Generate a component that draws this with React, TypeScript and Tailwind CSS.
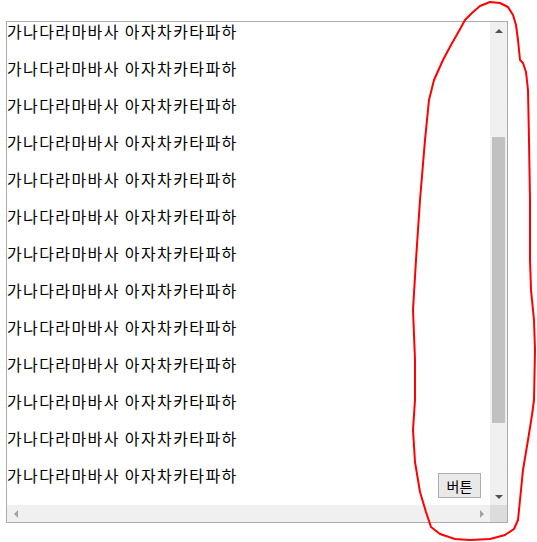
import React from "react";

const LINE = "가나다라마바사 아자차카타파하";

export default function App() {
  const lines = Array.from({ length: 13 }, (_, i) => i);
  const pts = [
    [490, 2], [500, 3], [508, 7], [513, 15], [516, 25], [518, 40], [520, 60], [523, 63], [526, 72], [528, 90],
    [529, 140], [530, 200], [530, 260], [531, 290], [534, 320], [535, 350], [534, 400], [532, 415], [528, 440],
    [523, 470], [520, 500], [518, 520], [514, 529], [505, 535], [490, 539], [470, 540], [455, 539], [440, 534],
    [431, 527], [426, 512], [420, 492], [415, 462], [413, 430], [415, 400], [415, 360], [413, 310], [416, 260],
    [420, 200], [425, 140], [429, 100], [434, 80], [443, 60], [451, 45], [459, 31], [465, 20], [473, 12], [480, 6],
  ];
  const d = "M " + pts.map((p) => p.join(" ")).join(" L ") + " Z";
  return (
    <div className="relative w-[537px] h-[542px] bg-white overflow-hidden" style={{ fontFamily: '"Noto Sans CJK KR", "Noto Sans", sans-serif' }}>
      <div className="pt-[21px] pl-[6px]">
        <div className="w-[502px] h-[502px] border border-[#ababab] grid grid-cols-[483px_17px] grid-rows-[483px_17px]">
          <div className="relative overflow-hidden">
            <div className="-mt-[9px]">
              {lines.map((i) => (
                <div key={i} className="text-[16px] leading-[37px] tracking-[1.4px] text-black whitespace-nowrap">
                  {LINE}
                </div>
              ))}
            </div>
            <button className="absolute left-[431px] top-[451px] w-[43px] h-[25px] border border-[#adadad] bg-[#e9e9e9] text-[14px] leading-none text-black flex items-center justify-center">
              버튼
            </button>
          </div>
          <div className="bg-[#f0f0f0] flex flex-col">
            <div className="h-[17px] flex items-center justify-center">
              <div className="w-0 h-0 border-l-[4px] border-r-[4px] border-b-[4px] border-l-transparent border-r-transparent border-b-[#505050]" />
            </div>
            <div className="flex-1 relative">
              <div className="absolute left-[2px] top-[98px] w-[13px] h-[286px] bg-[#c1c1c1]" />
            </div>
            <div className="h-[17px] flex items-center justify-center">
              <div className="w-0 h-0 border-l-[4px] border-r-[4px] border-t-[4px] border-l-transparent border-r-transparent border-t-[#505050]" />
            </div>
          </div>
          <div className="bg-[#f0f0f0] flex items-center justify-between">
            <div className="w-[17px] h-[17px] flex items-center justify-center">
              <div className="w-0 h-0 border-t-[4px] border-b-[4px] border-r-[4px] border-t-transparent border-b-transparent border-r-[#a3a3a3]" />
            </div>
            <div className="w-[17px] h-[17px] flex items-center justify-center">
              <div className="w-0 h-0 border-t-[4px] border-b-[4px] border-l-[4px] border-t-transparent border-b-transparent border-l-[#a3a3a3]" />
            </div>
          </div>
          <div className="bg-[#dcdcdc]" />
        </div>
      </div>
      <svg className="absolute left-0 top-0 pointer-events-none" width="537" height="542" viewBox="0 0 537 542">
        <path d={d} fill="none" stroke="#ff0000" strokeWidth="2" strokeLinejoin="round" strokeLinecap="round" />
      </svg>
    </div>
  );
}
